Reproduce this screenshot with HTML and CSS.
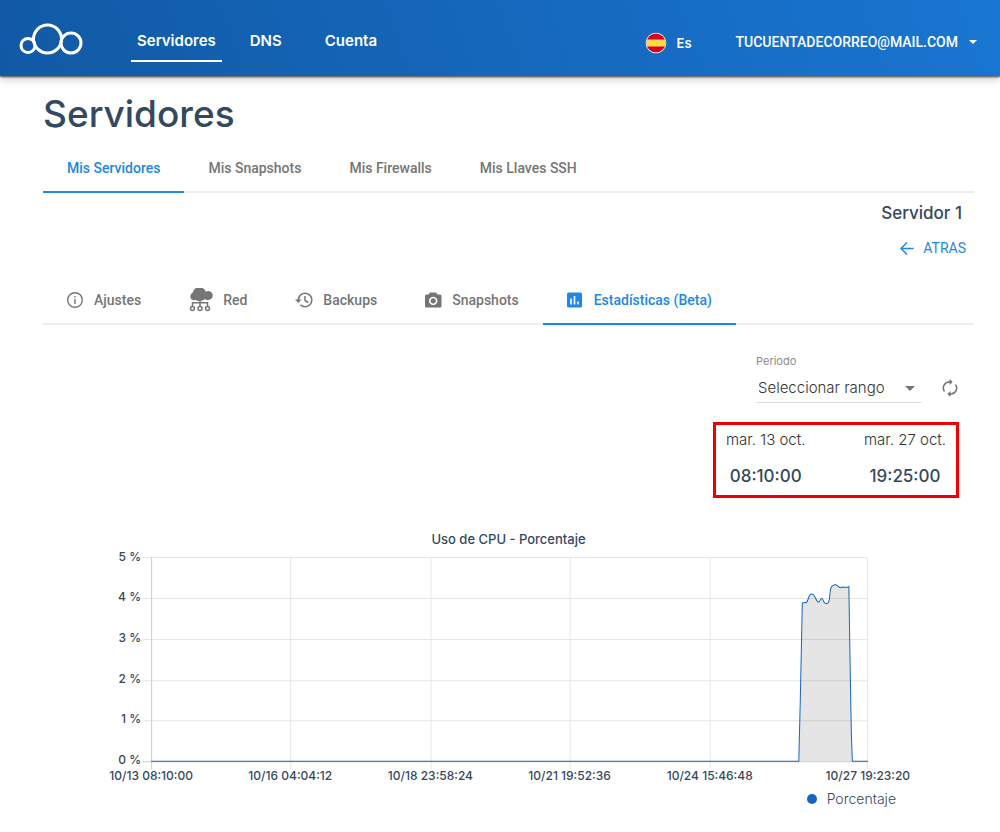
FILE: index.html
```html
<!DOCTYPE html>
<html lang="es">
  <head>
    <meta charset="UTF-8" />
    <meta name="viewport" content="width=device-width, initial-scale=1.0" />
    <title>Servidores - Estadísticas</title>
    <link rel="stylesheet" href="styles.css">
  </head>
  <body>
    <!-- Top bar -->
    <header class="topbar">
      <a href="#" class="logo" aria-label="Inicio">
        <svg width="64" height="34" viewBox="0 0 64 34" fill="none" stroke="#fff" stroke-width="3">
          <circle cx="9" cy="23.500" r="7" />
          <circle cx="28.500" cy="17" r="14" />
          <circle cx="52" cy="21" r="10" />
        </svg>
      </a>
      <nav class="main-nav">
        <a href="#" class="active">Servidores</a>
        <a href="#">DNS</a>
        <a href="#">Cuenta</a>
      </nav>
      <button type="button" class="lang">
        <svg width="22" height="22" viewBox="0 0 22 22">
          <clipPath id="flag"><circle cx="11" cy="11" r="9.500" /></clipPath>
          <circle cx="11" cy="11" r="10.300" fill="#fff" />
          <g clip-path="url(#flag)">
            <rect width="22" height="22" fill="#d80027" />
            <rect y="7.500" width="22" height="7" fill="#ffda44" />
          </g>
        </svg>
        <span>Es</span>
      </button>
      <button type="button" class="account">
        TUCUENTADECORREO@MAIL.COM
        <svg width="8" height="4" viewBox="0 0 8 4"><path d="M0 0h8L4 4z" fill="#fff" /></svg>
      </button>
    </header>

    <main class="page">
      <h1>Servidores</h1>

      <nav class="tabs">
        <a href="#" class="active">Mis Servidores</a>
        <a href="#">Mis Snapshots</a>
        <a href="#">Mis Firewalls</a>
        <a href="#">Mis Llaves SSH</a>
      </nav>

      <div class="server-head">
        <h2>Servidor 1</h2>
        <a href="#" class="back">
          <svg width="14" height="14" viewBox="0 0 14 14" fill="none" stroke="currentColor" stroke-width="1.500"><path d="M13.500 7.500H1.500M7 1.500L1 7.500l6 6" /></svg>
          ATRAS
        </a>
      </div>

      <nav class="tabs sub-tabs">
        <a href="#">
          <svg width="18" height="18" viewBox="0 0 18 18" fill="none" stroke="currentColor" stroke-width="1.400"><circle cx="8" cy="9" r="7.300" /><path d="M8 8v5M8 5v1.600" /></svg>
          Ajustes
        </a>
        <a href="#">
          <svg width="25" height="24" viewBox="1 0 25 24">
            <path d="M4.500 12A4.200 4.200 0 0 1 4.800 4.500a6.800 6.800 0 0 1 13-.800A4.500 4.500 0 1 1 20 12q-2 .3-3-1-2 2.200-5 1.500-2.300 1.300-4.200-.800-1.300 1-3.300.3z" fill="currentColor" />
            <path d="M12 12v6M4.500 18v-3.300h15V18" fill="none" stroke="currentColor" stroke-width="1.500" />
            <g fill="none" stroke="currentColor" stroke-width="1.500"><circle cx="4.500" cy="20.500" r="2" /><circle cx="12" cy="20.500" r="2" /><circle cx="19.500" cy="20.500" r="2" /></g>
          </svg>
          Red
        </a>
        <a href="#">
          <svg width="19" height="18" viewBox="0 0 19 18" fill="none" stroke="currentColor" stroke-width="1.500"><path d="M3.300 9.500V9a6.800 6.800 0 1 1 2 4.800M10 5v4.500l3.300 2" /><path d="M0 8.500h6.500L3.300 12z" fill="currentColor" stroke="none" /></svg>
          Backups
        </a>
        <a href="#">
          <svg width="18" height="18" viewBox="0 0 18 18"><path fill="currentColor" fill-rule="evenodd" d="M5 1.500h6l1.500 2H15q1.500 0 1.500 1.500v10q0 1.500-1.500 1.500H1.500Q0 16.500 0 15V5q0-1.500 1.500-1.500h2zM8.200 5.700a4.200 4.200 0 1 0 .01 0zM8.200 7.300a2.600 2.600 0 1 1-.01 0z" /></svg>
          Snapshots
        </a>
        <a href="#" class="active">
          <svg width="18" height="18" viewBox="0 0 18 18"><rect y="1.500" width="15" height="15" rx="1.500" fill="currentColor" /><path d="M4 7.500v6M7.500 5v8.500M11 10.500v3" stroke="#fff" stroke-width="1.600" /></svg>
          Estadísticas (Beta)
        </a>
      </nav>

      <!-- Period filter -->
      <div class="filter">
        <div class="period">
          <label for="period">Periodo</label>
          <select id="period">
            <option>Seleccionar rango</option>
          </select>
          <svg class="caret" width="10" height="5" viewBox="0 0 10 5"><path d="M0 0h10L5 5z" fill="#757575" /></svg>
        </div>
        <button type="button" class="refresh" aria-label="Actualizar">
          <svg width="16" height="18" viewBox="0 0 16 18"><path fill="none" stroke="#757575" stroke-width="1.500" d="M8 3H7a6 6 0 0 0-4.500 9.500M8 15h1a6 6 0 0 0 4.500-9.500" /><path fill="#757575" d="M7.500 0v6l3.200-3zM8.500 12v6l-3.200-3z" /></svg>
        </button>
      </div>

      <div class="range">
        <div>
          <p>mar. 13 oct.</p>
          <strong>08:10:00</strong>
        </div>
        <div>
          <p>mar. 27 oct.</p>
          <strong>19:25:00</strong>
        </div>
      </div>

      <!-- CPU chart -->
      <section class="chart">
        <h3>Uso de CPU - Porcentaje</h3>
        <svg viewBox="0 0 930 240" role="img" aria-label="Uso de CPU">
          <g class="grid">
            <path d="M99 8.500H824M99 49.500H824M99 90.500H824M99 131.500H824M99 171.500H824" />
            <path d="M247.500 8V220M387.500 8V220M526.500 8V220M666.500 8V220M823.500 8V220" />
            <path class="axis" d="M108.500 8V220M99 212.500H824" />
          </g>
          <path class="area" d="M755 212L756.500 150L758.500 54Q760 53.500 762 53.500C764.500 54 764.500 44 768 45C771.500 45 772.500 54 775 53C777 52 776 49 778 49.500C780 50 779 55 783 54.500C787 54 785 46 787 39C788 35.500 792 35 793.500 36.500C796 39 796 39 799 38C801 38 803 39 805 37.500L806.500 130L807.500 185L808.500 212z" />
          <path class="line" d="M108 212H755L756.500 150L758.500 54Q760 53.500 762 53.500C764.500 54 764.500 44 768 45C771.500 45 772.500 54 775 53C777 52 776 49 778 49.500C780 50 779 55 783 54.500C787 54 785 46 787 39C788 35.500 792 35 793.500 36.500C796 39 796 39 799 38C801 38 803 39 805 37.500L806.500 130L807.500 185L808.500 212H824" />
          <g class="y-labels">
            <text x="98" y="12">5 %</text>
            <text x="98" y="52">4 %</text>
            <text x="98" y="93">3 %</text>
            <text x="98" y="134">2 %</text>
            <text x="98" y="174">1 %</text>
            <text x="98" y="215">0 %</text>
          </g>
          <g class="x-labels">
            <text x="108" y="231">10/13 08:10:00</text>
            <text x="247" y="231">10/16 04:04:12</text>
            <text x="387" y="231">10/18 23:58:24</text>
            <text x="526" y="231">10/21 19:52:36</text>
            <text x="666" y="231">10/24 15:46:48</text>
            <text x="824" y="231">10/27 19:23:20</text>
          </g>
        </svg>
        <p class="legend">Porcentaje</p>
      </section>
    </main>
  </body>
</html>
```
FILE: styles.css
```css
* {
  margin: 0;
  padding: 0;
  box-sizing: border-box;
}

body {
  font-family: Inter, "Liberation Sans", sans-serif;
  color: #34495e;
  background: #fff;
}

a {
  color: inherit;
  text-decoration: none;
}

button {
  font: inherit;
  color: inherit;
  background: none;
  border: none;
  cursor: pointer;
}

/* Top bar */
.topbar {
  display: flex;
  align-items: center;
  height: 76px;
  padding: 2px 23px 0 19px;
  color: #fff;
  background: linear-gradient(70deg, #1159a5, #1976d2);
  box-shadow: 0 1px 2px rgba(0, 0, 0, 0.7), 0 2px 10px rgba(0, 0, 0, 0.25);
}

.logo {
  display: flex;
}

.main-nav {
  display: flex;
  gap: 22px;
  margin-left: 48px;
  font-size: 15px;
  font-weight: 600;
}

.main-nav a {
  min-width: 53px;
  padding: 14px 6px 8px;
  line-height: 22px;
  border-bottom: 2px solid transparent;
}

.main-nav .active {
  border-color: #fff;
}

.lang {
  display: flex;
  align-items: center;
  gap: 10px;
  margin-left: auto;
  padding-top: 8px;
  font-size: 13px;
  font-weight: 600;
}

.account {
  display: flex;
  align-items: center;
  gap: 11px;
  margin-left: 44px;
  padding-top: 6px;
  font-family: Roboto, sans-serif;
  font-size: 14px;
  font-weight: 500;
}

/* Page */
.page {
  padding: 16px 26px 20px 43px;
}

h1 {
  font-size: 37px;
  font-weight: 500;
  line-height: 44px;
}

.tabs {
  display: flex;
  margin-top: 8px;
  color: #757575;
  font-family: Roboto, sans-serif;
  font-size: 14px;
  font-weight: 500;
  border-bottom: 2px solid #eee;
}

.tabs a {
  display: flex;
  align-items: center;
  gap: 9px;
  height: 49px;
  margin-bottom: -2px;
  padding: 0 24px;
  border-bottom: 2px solid transparent;
}

.tabs .active {
  color: #1e88e5;
  border-color: #1e88e5;
}

.server-head {
  display: flex;
  flex-direction: column;
  align-items: flex-end;
  gap: 14px;
  padding: 9px 8px 0 0;
}

h2 {
  padding-right: 4px;
  font-size: 17px;
  font-weight: 500;
  line-height: 22px;
}

.back {
  display: flex;
  align-items: center;
  gap: 9px;
  color: #1e88e5;
  font-family: Roboto, sans-serif;
  font-size: 14px;
  line-height: 20px;
}

.sub-tabs {
  margin-top: 18px;
}

/* Period filter */
.filter {
  display: flex;
  justify-content: flex-end;
  align-items: flex-end;
  gap: 20px;
  padding: 27px 16px 0 0;
}

.period {
  position: relative;
  width: 166px;
}

.period label {
  display: block;
  color: #8a8a8a;
  font-size: 11px;
  line-height: 18px;
}

.period select {
  width: 100%;
  height: 33px;
  padding: 2px 0 0 2px;
  color: #333;
  font: 300 15px Inter, sans-serif;
  background: none;
  border: none;
  border-bottom: 1px solid #ddd;
  appearance: none;
}

.period .caret {
  position: absolute;
  right: 7px;
  bottom: 12px;
}

.refresh {
  display: flex;
  padding-bottom: 6px;
}

.range {
  display: flex;
  justify-content: space-between;
  width: 246px;
  margin: 19px 15px 0 auto;
  padding: 2px 10px 6px;
  text-align: center;
  border: 3px solid #f00000;
}

.range p {
  color: #333;
  font-size: 15px;
  font-weight: 300;
  line-height: 26px;
}

.range strong {
  display: block;
  margin-top: 10px;
  font-size: 17px;
  font-weight: 500;
  line-height: 26px;
}

/* Chart */
.chart {
  margin-top: 31px;
}

.chart h3 {
  font-size: 13px;
  font-weight: 500;
  line-height: 20px;
  text-align: center;
}

.chart svg {
  display: block;
  width: 100%;
}

.chart text {
  fill: #34495e;
  font-size: 12px;
  font-weight: 500;
}

.grid path {
  fill: none;
  stroke: #e6e6e6;
}

.grid .axis {
  stroke: #ccc;
}

.area {
  fill: rgba(0, 0, 0, 0.1);
}

.line {
  fill: none;
  stroke: #1565c0;
}

.y-labels {
  text-anchor: end;
}

.x-labels {
  text-anchor: middle;
}

.legend {
  display: flex;
  align-items: center;
  justify-content: flex-end;
  gap: 10px;
  padding-right: 78px;
  font-size: 14px;
  font-weight: 300;
  line-height: 20px;
}

.legend::before {
  content: "";
  width: 10px;
  height: 10px;
  background: #1565c0;
  border-radius: 50%;
}
```
